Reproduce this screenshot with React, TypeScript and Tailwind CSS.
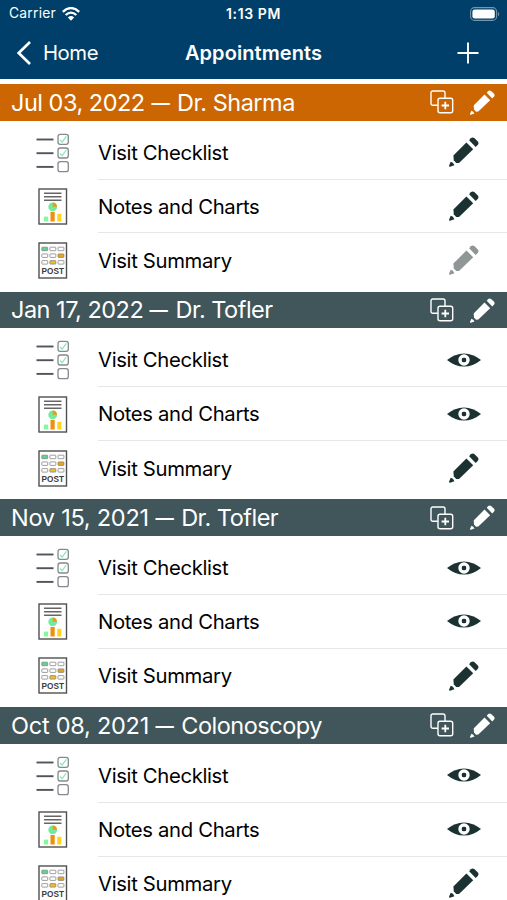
interface Appointment {
  date: string
  name: string
  active?: boolean
  spacing: string
  actions: ActionKind[]
}

type ActionKind = 'edit' | 'view' | 'disabled'

const appointments: Appointment[] = [
  {
    date: 'Jul 03, 2022',
    name: 'Dr. Sharma',
    active: true,
    spacing: 'tracking-[-0.5px]',
    actions: ['edit', 'edit', 'disabled'],
  },
  { date: 'Jan 17, 2022', name: 'Dr. Tofler', spacing: 'tracking-[-0.5px]', actions: ['view', 'view', 'edit'] },
  { date: 'Nov 15, 2021', name: 'Dr. Tofler', spacing: 'tracking-[-0.25px]', actions: ['view', 'view', 'edit'] },
  { date: 'Oct 08, 2021', name: 'Colonoscopy', spacing: 'tracking-[-0.25px]', actions: ['view', 'view', 'edit'] },
]

function Pencil({ className }: { className: string }) {
  return (
    <svg viewBox="0 0 30 30" className={className} fill="currentColor" aria-hidden="true">
      <path d="M21.8 1.3Q23.4-.2 25.3 1.1L28.6 4.3Q30.2 6 28.9 7.7L26.7 10.1L20.1 3.3Z" />
      <path d="M17.4 5.5L24.2 12.2L10 25.9L7.2 26L4.8 23.3L4.4 18.6Z" />
      <path d="M1.7 24.8Q4.3 25.2 5.4 28.3L1 29.8Q-.2 29.9.1 28.6Z" />
    </svg>
  )
}

function Eye() {
  return (
    <svg viewBox="0 0 34 14" className="h-[14px] w-[34px]" aria-hidden="true">
      <path d="M0 7Q8 .4 17 .4T34 7Q26 13.6 17 13.6T0 7Z" fill="#1b3132" />
      <circle cx="17" cy="7" r="4" fill="#1b3132" stroke="#fff" strokeWidth="3.4" />
      <circle cx="17" cy="7" r="2.2" fill="#1b3132" />
    </svg>
  )
}

function Duplicate() {
  return (
    <svg viewBox="0 0 24 24" className="h-6 w-6" fill="none" stroke="currentColor" strokeWidth="1.4" aria-hidden="true">
      <path d="M8 15.3H3Q1 15.3 1 13.3V3Q1 1 3 1H13Q15 1 15 3V8" />
      <rect x="8" y="8.3" width="14.7" height="14.4" rx="2" />
      <path d="M15.3 11.8V19.2M11.6 15.5H19" strokeWidth="1.8" />
    </svg>
  )
}

function ChecklistIcon() {
  return (
    <svg viewBox="0 0 34 40" className="h-10 w-[34px]" fill="none" aria-hidden="true">
      {[1.3, 15, 28.7].map((y, i) => (
        <g key={y}>
          <path d={`M.5 ${y + 5.2}H17.5`} stroke="#50545c" strokeWidth="1.9" />
          <rect x="22" y={y} width="10.3" height="10" rx="2.2" stroke="#85888d" strokeWidth="1.3" />
          {i < 2 && <path d={`M24 ${y + 5.5}L26.2 ${y + 7.7}L30.3 ${y + 2}`} stroke="#7feab0" strokeWidth="1.2" />}
        </g>
      ))}
    </svg>
  )
}

function ChartIcon() {
  return (
    <svg viewBox="0 0 30 37" className="h-[37px] w-[30px]" fill="none" aria-hidden="true">
      <rect x="1" y="1" width="27.5" height="35" fill="#fff" stroke="#505050" strokeWidth="1.4" />
      <path d="M6 5.2H23.5M6 8.8H23.5M6 12.3H23.5" stroke="#666" strokeWidth="1.4" />
      <circle cx="14.7" cy="18.8" r="4.4" fill="#72ec9c" />
      <path d="M14.7 18.8V14.4A4.4 4.4 0 0 1 19.1 18.8Z" fill="#e89a1c" />
      <path d="M6 28.6H10.2V33.5H6Z" fill="#82f8a0" />
      <path d="M12.5 24H16.7V33.5H12.5Z" fill="#ef8f0a" />
      <path d="M19.3 25.8H23.3V33.5H19.3Z" fill="#ffd21c" />
    </svg>
  )
}

const cells = [
  ['#63d394', '#fff', '#fff'],
  ['#fff', '#fff', '#e7a51f'],
  ['#fff', '#edbd2c', '#fff'],
]

function PostIcon() {
  return (
    <svg viewBox="0 0 30 37" className="h-[37px] w-[30px]" aria-hidden="true">
      <rect x="1" y="1" width="27.5" height="35" fill="#fff" stroke="#505050" strokeWidth="1.4" />
      {cells.map((row, r) =>
        row.map((fill, c) => (
          <rect
            key={`${r}-${c}`}
            x={3.8 + c * 8.1}
            y={5.2 + r * 6.7}
            width="5.9"
            height="3.5"
            rx=".6"
            fill={fill}
            stroke="#858585"
            strokeWidth=".8"
          />
        )),
      )}
      <text
        x="14.8"
        y="31.6"
        textAnchor="middle"
        textLength="22.4"
        lengthAdjust="spacingAndGlyphs"
        className="font-['Liberation_Sans',sans-serif] text-[8.4px] font-bold"
        fill="#3c3c3c"
      >
        POST
      </text>
    </svg>
  )
}

const rows = [
  { label: 'Visit Checklist', Icon: ChecklistIcon },
  { label: 'Notes and Charts', Icon: ChartIcon },
  { label: 'Visit Summary', Icon: PostIcon },
]

function Action({ kind }: { kind: ActionKind }) {
  if (kind === 'view') return <Eye />
  return <Pencil className={kind === 'edit' ? 'h-[30px] w-[30px] text-[#1b3132]' : 'h-[30px] w-[30px] text-[#8f9696]'} />
}

function AppointmentSection({ date, name, active, spacing, actions }: Appointment) {
  return (
    <section className="h-[207.7px] shrink-0">
      <header
        className={`flex h-[36.8px] items-center pr-[12px] pl-[11px] text-white ${active ? 'bg-[#cb6602]' : 'bg-[#40565a]'}`}
      >
        <h2 className="flex-1 text-[23.5px] leading-none tracking-[-0.5px] whitespace-nowrap">
          <span className={spacing}>{date}</span>{' '}
          <span className="-mr-[0.9px] -ml-[2px] inline-block scale-x-[0.78]">—</span> <span>{name}</span>
        </h2>
        <Duplicate />
        <Pencil className="ml-[16px] h-[25px] w-[25px]" />
      </header>
      <ul className="pt-[5px]">
        {rows.map(({ label, Icon }, i) => (
          <li key={label} className="flex h-[53.85px] items-center">
            <span className="flex w-[98px] justify-center pl-[7.6px]">
              <Icon />
            </span>
            <div
              className={`flex h-full flex-1 items-center justify-between ${i < 2 ? 'border-b border-[#e6e7e8]' : ''}`}
            >
              <span className="pt-[1.4px] text-[20.3px] leading-none tracking-[-0.34px] whitespace-nowrap">{label}</span>
              <span className="mr-[26px] flex w-[34px] justify-center">
                <Action kind={actions[i]} />
              </span>
            </div>
          </li>
        ))}
      </ul>
    </section>
  )
}

export default function App() {
  return (
    <main className="flex h-[900px] w-[507px] flex-col overflow-hidden bg-white font-['Inter',sans-serif] text-black">
      <div className="h-[79.3px] shrink-0 bg-[#003f69] text-white">
        <div className="grid h-[27px] grid-cols-3 items-center px-[9px]">
          <div className="flex items-center gap-[6px] text-[13.8px] tracking-[0.25px]">
            <span>Carrier</span>
            <svg viewBox="0 0 18 14" className="h-[14px] w-[18px]" fill="none" stroke="currentColor" aria-hidden="true">
              <path d="M.8 4.8Q9-2.7 17.2 4.8M3.7 8Q9 3.2 14.3 8" strokeWidth="2.3" />
              <path d="M9 13.7L5.9 10.4Q9 7.8 12.1 10.4Z" fill="currentColor" stroke="none" />
            </svg>
          </div>
          <span className="text-center text-[14px] font-semibold tracking-[0.6px]">1:13 PM</span>
          <svg viewBox="0 0 30 14" className="mr-[-2px] h-[14px] w-[30px] justify-self-end" aria-hidden="true">
            <rect x=".6" y=".6" width="26" height="12.8" rx="4" fill="none" stroke="#7597ad" strokeWidth="1.1" />
            <rect x="2.4" y="2.4" width="22.4" height="9.2" rx="2.4" fill="#fff" />
            <path d="M28 4.7Q30.5 7 28 9.3Z" fill="#7597ad" />
          </svg>
        </div>
        <nav className="grid h-[51px] grid-cols-[1fr_auto_1fr] items-center px-[17px]">
          <button className="flex items-center gap-[12px] pt-px text-[20.3px] tracking-[-0.45px]">
            <svg viewBox="0 0 14 24" className="h-6 w-[14px]" fill="none" stroke="currentColor" aria-hidden="true">
              <path d="M13 1L1.7 12L13 23" strokeWidth="2.7" />
            </svg>
            Home
          </button>
          <h1 className="text-center text-[20px] font-semibold tracking-[0.08px]">Appointments</h1>
          <svg
            viewBox="0 0 22 22"
            className="mr-[11px] h-[22px] w-[22px] justify-self-end"
            stroke="currentColor"
            aria-hidden="true"
          >
            <path d="M11 .5V21.5M.5 11H21.5" strokeWidth="1.9" />
          </svg>
        </nav>
      </div>
      <div className="pt-[4.7px]">
        {appointments.map((appointment) => (
          <AppointmentSection key={appointment.date} {...appointment} />
        ))}
      </div>
    </main>
  )
}
